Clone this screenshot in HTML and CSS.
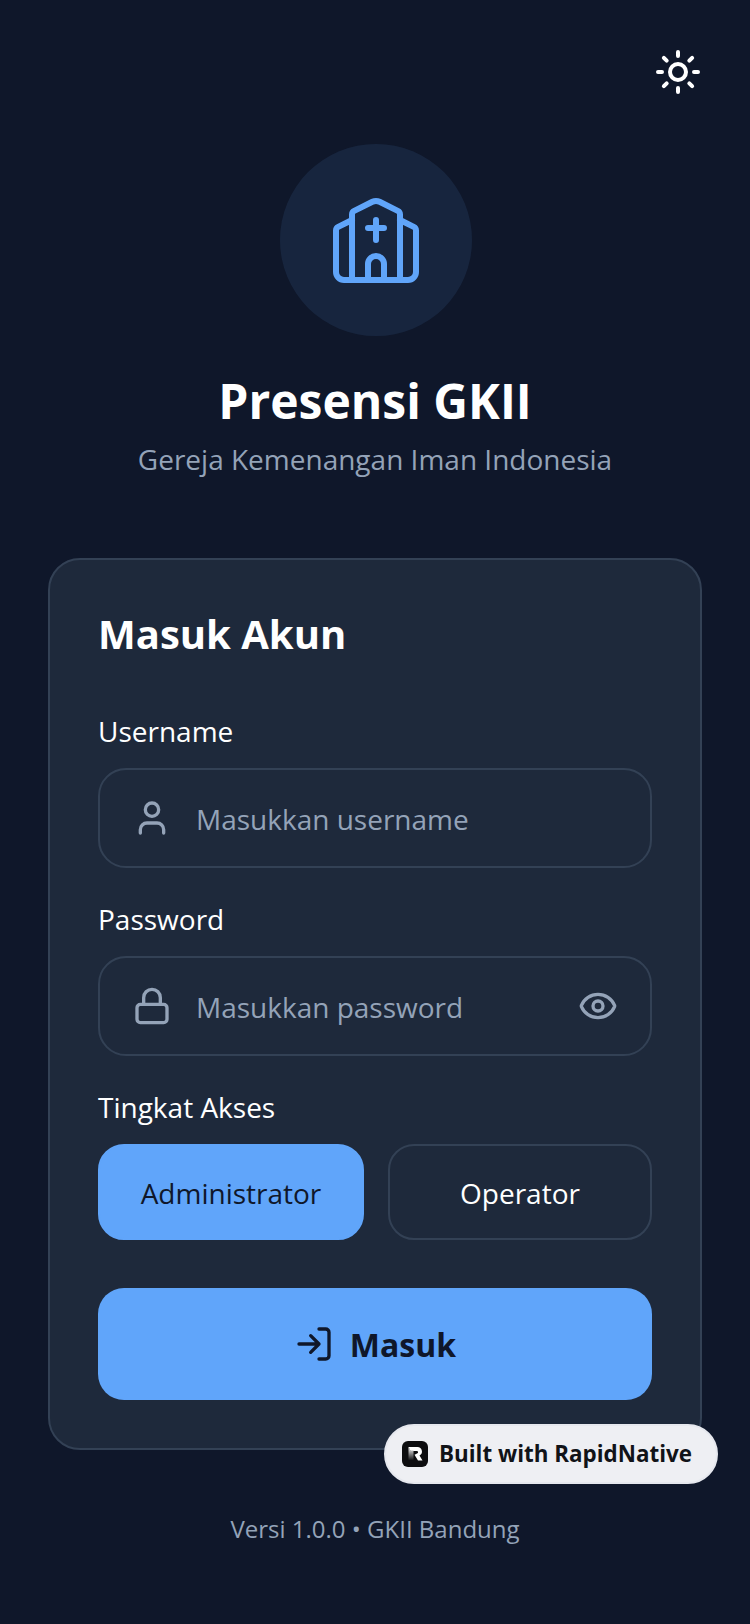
FILE: index.html
```html
<!DOCTYPE html>
<html lang="id">
<head>
<meta charset="utf-8">
<title>Presensi GKII</title>
<link rel="stylesheet" href="styles.css">
</head>
<body>
<main class="screen">
  <div class="topbar">
    <svg class="icon-sun" viewBox="0 0 24 24"><circle cx="12" cy="12" r="4"/><path d="M12 2v2M12 20v2M4.93 4.93l1.41 1.41M17.66 17.66l1.41 1.41M2 12h2M20 12h2M6.34 17.66l-1.41 1.41M19.07 4.93l-1.41 1.41"/></svg>
  </div>
  <header class="brand">
    <div class="logo">
      <svg class="icon-church" viewBox="0 0 24 24"><path d="M10 9h4M12 7v5M14 22v-4a2 2 0 0 0-4 0v4M18 22V5.618a1 1 0 0 0-.553-.894l-4.553-2.277a2 2 0 0 0-1.788 0L6.553 4.724A1 1 0 0 0 6 5.618V22M18 7l3.447 1.724a1 1 0 0 1 .553.894V20a2 2 0 0 1-2 2H4a2 2 0 0 1-2-2V9.618a1 1 0 0 1 .553-.894L6 7"/></svg>
    </div>
    <h1 class="title">Presensi GKII</h1>
    <p class="subtitle">Gereja Kemenangan Iman Indonesia</p>
  </header>
  <section class="card">
    <h2 class="card-title">Masuk Akun</h2>
    <div class="label">Username</div>
    <div class="field">
      <svg class="icon" viewBox="0 0 24 24"><path d="M19 21v-2a4 4 0 0 0-4-4H9a4 4 0 0 0-4 4v2"/><circle cx="12" cy="7" r="4"/></svg>
      <span class="placeholder">Masukkan username</span>
    </div>
    <div class="label">Password</div>
    <div class="field">
      <svg class="icon" viewBox="0 0 24 24"><rect x="3" y="11" width="18" height="11" rx="2"/><path d="M7 11V7a5 5 0 0 1 10 0v4"/></svg>
      <span class="placeholder">Masukkan password</span>
      <svg class="icon icon-eye" viewBox="0 0 24 24"><path d="M2.062 12.348a1 1 0 0 1 0-.696 10.75 10.75 0 0 1 19.876 0 1 1 0 0 1 0 .696 10.75 10.75 0 0 1-19.876 0"/><circle cx="12" cy="12" r="3"/></svg>
    </div>
    <div class="label">Tingkat Akses</div>
    <div class="roles">
      <div class="role role-active">Administrator</div>
      <div class="role">Operator</div>
    </div>
    <div class="submit">
      <svg class="icon-login" viewBox="0 0 24 24"><path d="M15 3h4a2 2 0 0 1 2 2v14a2 2 0 0 1-2 2h-4M10 17l5-5-5-5M15 12H3"/></svg>
      <span>Masuk</span>
    </div>
    <div class="badge">
      <svg class="badge-logo" viewBox="0 0 26 26">
        <defs><linearGradient id="rfade" x1="0" y1="0" x2="0" y2="1"><stop offset="0" stop-color="#fff"/><stop offset="1" stop-color="#0d0d0f"/></linearGradient></defs>
        <rect width="26" height="26" rx="6" fill="#0d0d0f"/>
        <path d="M6.500 6h9a4.500 4.500 0 0 1 2 8.500l3 5h-4.500l-3.500-5.800 3-1.500a1.200 1.200 0 0 0-.5-2.200H8.500z" fill="#fff"/>
        <path d="M6.500 6l2 3.500h3V19.500H6.500z" fill="url(#rfade)"/>
      </svg>
      <span class="badge-text">Built with RapidNative</span>
    </div>
  </section>
  <footer class="footer">Versi 1.0.0 • GKII Bandung</footer>
</main>
</body>
</html>
```
FILE: styles.css
```css
* { box-sizing: border-box; }
html, body { margin: 0; padding: 0; }
body {
  background: #0f172a;
  font-family: "Open Sans", sans-serif;
  color: #fff;
  width: 750px;
  height: 1624px;
  overflow: hidden;
}
.screen { padding: 48px 48px 0; display: flex; flex-direction: column; }
.topbar { display: flex; justify-content: flex-end; height: 48px; }
.icon-sun { width: 48px; height: 48px; fill: none; stroke: #fff; stroke-width: 2; stroke-linecap: round; stroke-linejoin: round; }
.brand { display: flex; flex-direction: column; align-items: center; margin-top: 48px; }
.logo { width: 192px; height: 192px; margin-left: 2px; border-radius: 50%; background: rgba(96,165,250,.1); display: flex; align-items: center; justify-content: center; }
.icon-church { width: 96px; height: 96px; fill: none; stroke: #60a5fa; stroke-width: 1.5; stroke-linecap: round; stroke-linejoin: round; }
.title { margin: 32px 0 0; font-size: 48px; line-height: 66px; font-weight: 700; }
.subtitle { margin: 5px 0 0; font-size: 28px; line-height: 40px; color: #94a3b8; }
.card { position: relative; margin-top: 79px; height: 892px; background: #1e293b; border: 2px solid #334155; border-radius: 32px; padding: 48px; }
.card-title { margin: 0; font-size: 40px; line-height: 52px; font-weight: 700; }
.label { margin-top: 32px; font-size: 28px; line-height: 38px; }
.card-title + .label { margin-top: 52px; }
.field { margin-top: 18px; height: 100px; border: 2px solid #334155; border-radius: 28px; display: flex; align-items: center; padding: 0 32px; gap: 24px; }
.icon { width: 40px; height: 40px; flex: none; fill: none; stroke: #94a3b8; stroke-width: 2; stroke-linecap: round; stroke-linejoin: round; }
.icon-eye { margin-left: auto; }
.placeholder { font-size: 28px; color: #94a3b8; padding-top: 2px; }
.roles { display: flex; gap: 24px; margin-top: 18px; }
.role { flex: 1 1 0; height: 96px; padding-top: 2px; border: 2px solid #334155; border-radius: 26px; display: flex; align-items: center; justify-content: center; font-size: 28px; }
.role-active { flex-basis: 6px; background: #60a5fa; border-color: #60a5fa; color: #0f172a; }
.submit { margin-top: 48px; height: 112px; background: #60a5fa; border-radius: 26px; display: flex; align-items: center; justify-content: center; gap: 16px; color: #0f172a; font-size: 32px; font-weight: 700; }
.icon-login { width: 40px; height: 40px; fill: none; stroke: #0f172a; stroke-width: 2; stroke-linecap: round; stroke-linejoin: round; }
.badge { position: absolute; left: 334px; top: 864px; width: 334px; height: 60px; border-radius: 30px; background: #eeeff3; border: 2px solid #e6e8ee; display: flex; align-items: center; padding: 0 0 0 16px; gap: 11px; color: #111318; font-size: 22.4px; font-weight: 700; }
.badge-logo { width: 26px; height: 26px; flex: none; }
.badge-text { padding-bottom: 2px; }
.footer { margin-top: 62px; text-align: center; font-size: 24px; line-height: 34px; color: #94a3b8; }
```
